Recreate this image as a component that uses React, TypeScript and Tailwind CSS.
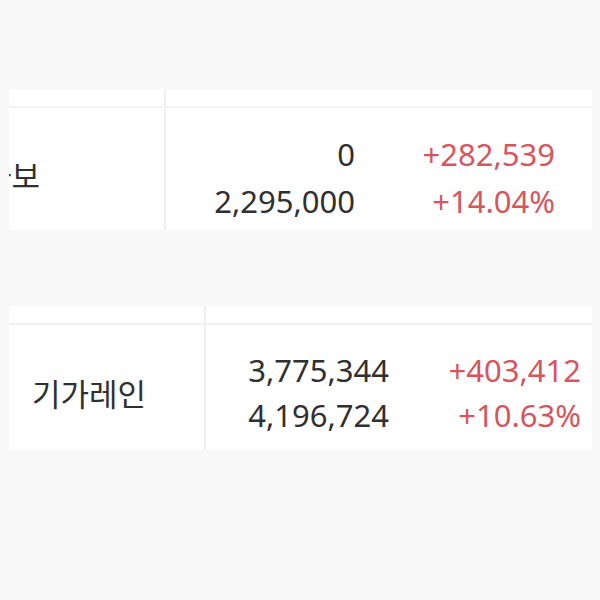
const font = { fontFamily: '"Noto Sans", "Noto Sans CJK KR", sans-serif' };

type Row = {
  label: React.ReactNode;
  labelCol: string;
  qty: string;
  amount: string;
  diff: string;
  rate: string;
  pad: string;
  redCol: string;
  lead: string;
};

const StockCard: React.FC<{ row: Row }> = ({ row }) => {
  return (
    <div className="bg-white w-[583px] ml-[9px]">
      <div className="flex h-[19px] border-b-2 border-[#f1f1f1]">
        <div className={`${row.labelCol} border-r-2 border-[#f0f0f0]`} />
        <div className="flex-1" />
      </div>
      <div className="flex">
        <div className={`${row.labelCol} shrink-0 border-r-2 border-[#f0f0f0] overflow-hidden flex items-center`}>
          {row.label}
        </div>
        <div className={`flex-1 flex justify-end ${row.pad}`}>
          <div className={`text-right text-[#303030] ${row.lead}`}>
            <div>{row.qty}</div>
            <div>{row.amount}</div>
          </div>
          <div className={`${row.redCol} text-right text-[#d4575e] ${row.lead}`}>
            <div>{row.diff}</div>
            <div>{row.rate}</div>
          </div>
        </div>
      </div>
    </div>
  );
};

const App: React.FC = () => {
  const first: Row = {
    label: <span className="whitespace-nowrap ml-[-26px] mt-[14px] text-[#303030]">가보</span>,
    labelCol: "w-[157px]",
    qty: "0",
    amount: "2,295,000",
    diff: "+282,539",
    rate: "+14.04%",
    pad: "pr-[37px] pt-[23px] pb-[5px]",
    redCol: "w-[200px]",
    lead: "leading-[47px]",
  };
  const second: Row = {
    label: <span className="whitespace-nowrap ml-[23px] mt-[14px] text-[#303030]">기가레인</span>,
    labelCol: "w-[197px]",
    qty: "3,775,344",
    amount: "4,196,724",
    diff: "+403,412",
    rate: "+10.63%",
    pad: "pr-[11px] pt-[23px] pb-[12px]",
    redCol: "w-[192px]",
    lead: "leading-[45px]",
  };
  return (
    <div className="w-[600px] h-[600px] bg-[#f8f8f8] pt-[89px] text-[31px]" style={font}>
      <StockCard row={first} />
      <div className="h-[76px]" />
      <StockCard row={second} />
    </div>
  );
};

export default App;
